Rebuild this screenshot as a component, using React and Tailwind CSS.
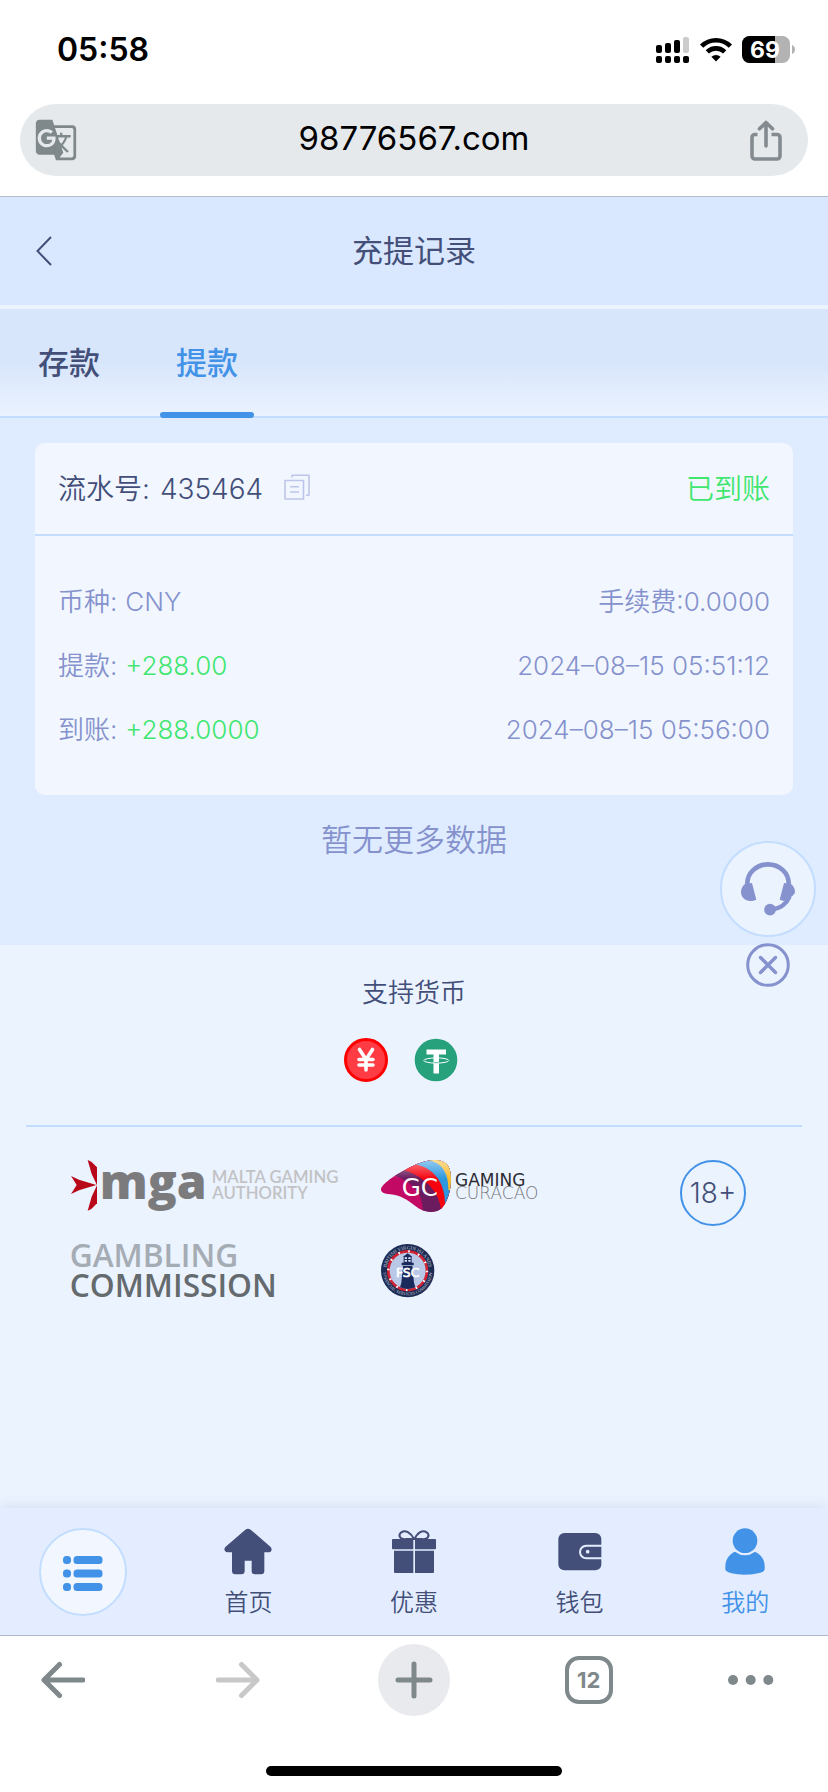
import { useState } from "react";
import { MdGTranslate } from "react-icons/md";

const records = [
    {
        id: 435464,
        status: "已到账",
        rows: [
            { label: "币种:", value: "CNY", color: "text-[#8592cd]", right: "手续费:0.0000" },
            { label: "提款:", value: "+288.00", color: "text-[#3fe670]", right: "2024–08–15 05:51:12" },
            { label: "到账:", value: "+288.0000", color: "text-[#3fe670]", right: "2024–08–15 05:56:00" },
        ],
    },
]

const StatusBar = () => {
    return <div className="h-[104px] flex items-center justify-between pl-[57px] pr-8 pb-1">
        <span className="text-[32px] leading-10 font-semibold text-black">05:58</span>
        <div className="flex items-center gap-[9px]">
            <svg width="34" height="28" viewBox="0 0 34 28" aria-hidden="true">
                <rect x="0" y="9" width="6" height="8" rx="2" />
                <rect x="9" y="7" width="6" height="10" rx="2" />
                <rect x="18" y="4" width="6" height="13" rx="2" />
                <rect x="27" y="1" width="6" height="16" rx="2" fill="#cccccc" />
                <rect x="0" y="20" width="6" height="7" rx="2" />
                <rect x="9" y="20" width="6" height="7" rx="2" />
                <rect x="18" y="20" width="6" height="7" rx="2" />
                <rect x="27" y="20" width="6" height="7" rx="2" />
            </svg>
            <svg width="34" height="28" viewBox="0 0 34 28" fill="none" stroke="#000" strokeWidth="4.6" aria-hidden="true">
                <path d="M2.6 10.2a20.4 20.4 0 0 1 28.8 0" />
                <path d="M8.3 15.9a12.4 12.4 0 0 1 17.4 0" />
                <path d="M17 25.4l-4.6-4.6a6.5 6.5 0 0 1 9.2 0z" fill="#000" stroke="none" />
            </svg>
            <svg width="54" height="28" viewBox="0 0 54 28" aria-hidden="true">
                <clipPath id="battery"><rect x="0" y="0" width="48" height="27" rx="7.5" /></clipPath>
                <g clipPath="url(#battery)">
                    <rect width="48" height="27" fill="#b3b3b3" />
                    <rect width="33" height="27" fill="#000" />
                </g>
                <path d="M50 9c2 .6 3 2.400 3 4.500s-1 3.900-3 4.500z" fill="#b3b3b3" />
                <text x="23" y="22" textAnchor="middle" fontSize="23" fontWeight="700" fill="#fff">69</text>
            </svg>
        </div>
    </div>
}

const AddressBar = () => {
    return <div className="px-5 pb-5 border-b border-[#b3bccb]">
        <div className="h-[72px] rounded-full bg-[#e5e9ec] flex items-center justify-between px-[14px]">
            <button type="button" aria-label="Translate" className="w-[44px] text-[#7f888b]">
                <MdGTranslate size={44} />
            </button>
            <span className="pb-1 text-[33px] leading-10 text-black">98776567.com</span>
            <button type="button" aria-label="Share" className="w-[44px] flex">
                <svg width="36" height="42" viewBox="7 -1 36 42" fill="none" stroke="#848b90" strokeWidth="3.6" strokeLinecap="round" strokeLinejoin="round">
                    <path d="M14.500 14.500H12a3 3 0 0 0-3 3V36a3 3 0 0 0 3 3h22a3 3 0 0 0 3-3V17.500a3 3 0 0 0-3-3H28.500" strokeLinecap="butt" />
                    <path d="M23 26V3M16.500 8.800L23 2.500l6.500 6.300" />
                </svg>
            </button>
        </div>
    </div>
}

const RecordCard = ({ record }) => {
    return <article className="rounded-[10px] bg-[#f2f7ff]">
        <div className="h-[93px] border-b-2 border-[#c3ddff] px-[23px] flex items-center justify-between text-[28px] leading-10">
            <div className="flex items-center">
                <span className="flex gap-2.5 font-[350] text-[#434f79]"><span>流水号:</span><span>{record.id}</span></span>
                <button type="button" aria-label="复制" className="ml-5">
                    <svg width="30" height="30" viewBox="0 0 30 30" fill="none" stroke="#bdc6ea" strokeWidth="1.600" strokeLinejoin="round">
                        <rect x="2" y="6.500" width="18.500" height="18.500" />
                        <path d="M9 3.500V1.200h17v20h-3M7 12.800h9M7 18h9" />
                    </svg>
                </button>
            </div>
            <span className="font-[350] text-[#3fe670]">{record.status}</span>
        </div>
        <div className="px-[23px] pt-[34px] pb-[33px] text-[26px] leading-[64px] font-[350] text-[#8592cd]">
            {
                record.rows.map((row) => (
                    <div key={row.label} className="flex justify-between">
                        <span className="flex gap-2"><span>{row.label}</span><span className={row.color}>{row.value}</span></span>
                        <span>{row.right}</span>
                    </div>
                ))
            }
        </div>
    </article>
}

const FloatingService = () => {
    return <div className="absolute right-3 bottom-[-42px] flex flex-col items-center gap-1.5">
        <button type="button" aria-label="客服" className="w-24 h-24 rounded-full border-2 border-[#c3ddff] bg-[#ebf3ff] flex items-center justify-center">
            <svg width="54" height="54" viewBox="0 0 162 162" fill="none">
                <path d="M19 68V64a62 57 0 0 1 124 0v4" stroke="#8592cd" strokeWidth="14" />
                <path d="M12 66l21-3 13 50C20 124 0 110 0 90c0-10 5-18 12-24z" fill="#8592cd" />
                <path d="M150 66l-21-3-13 50 12 4c10-4 34-17 34-28 0-9-5-17-12-23z" fill="#8592cd" />
                <path d="M146 104c-8 18-26 36-54 38" stroke="#8592cd" strokeWidth="13" />
                <circle cx="87" cy="143" r="17.500" fill="#8592cd" />
            </svg>
        </button>
        <button type="button" aria-label="关闭">
            <svg width="44" height="44" viewBox="0 0 44 44" fill="none" stroke="#8592cd" strokeLinecap="round">
                <circle cx="22" cy="22" r="20.300" strokeWidth="3" />
                <path d="M14.500 14.500l15 15M29.500 14.500l-15 15" strokeWidth="3.400" />
            </svg>
        </button>
    </div>
}

const CnyIcon = () => (
    <svg width="44" height="44" viewBox="0 0 44 44" fill="none" role="img" aria-label="CNY">
        <circle cx="22" cy="22" r="20.500" fill="#ff3b44" stroke="#ff0000" strokeWidth="3" />
        <path d="M15.500 11.500L22 21.500l6.500-10M15 21.500h14M15 27h14M22 21.500V32" stroke="#fff" strokeWidth="3.600" strokeLinecap="round" strokeLinejoin="round" />
    </svg>
)

const UsdtIcon = () => (
    <svg width="44" height="44" viewBox="0 0 44 44" fill="none" role="img" aria-label="USDT">
        <circle cx="22" cy="22" r="21.300" fill="#27a17c" />
        <path d="M12.500 11.500h19.500v5h-7V35.500h-5.500V16.500h-7z" fill="#fff" />
        <path d="M19.500 23.800q3 .4 5.500 0v1.200q-2.500.4-5.500 0z" fill="#27a17c" />
        <ellipse cx="22.300" cy="22.500" rx="12.500" ry="2.600" stroke="#fff" strokeWidth="1" />
    </svg>
)

const MgaLogo = () => (
    <svg className="overflow-visible" width="270" height="54" viewBox="0 0 810 162" role="img" aria-label="Malta Gaming Authority">
        <g fill="#b80718">
            <path d="M50 0l11 5 17 17v54L62 42z" />
            <path d="M50 152l11-5 17-17V76L62 110z" />
            <path d="M0 48l24 11 52 16-52 16L0 102l17-27z" />
        </g>
        <text x="86" y="118" fontFamily="Open Sans" fontSize="144" fontWeight="800" fill="#7b7b7d">mga</text>
        <g fontFamily="Lato" fontSize="50" fontWeight="600" fill="#c2c2c4">
            <text x="422" y="70">MALTA GAMING</text>
            <text x="424" y="117">AUTHORITY</text>
        </g>
    </svg>
)

const CuracaoLogo = () => (
    <svg className="overflow-visible" width="164" height="54" viewBox="0 0 492 162" role="img" aria-label="Gaming Curacao">
        <defs>
            <clipPath id="gcShape">
                <path d="M0 88C0 76 32 50 74 29C105 12 135 0 162 0C194 0 210 18 210 55C210 95 198 127 182 145C165 162 127 158 104 139C77 117 57 106 28 103C8 101 0 98 0 88z" />
            </clipPath>
            <linearGradient id="gcGloss" x1="0" y1="0" x2="0" y2="1">
                <stop offset="0" stopColor="#fff" stopOpacity="0.500" />
                <stop offset="0.350" stopColor="#fff" stopOpacity="0" />
            </linearGradient>
        </defs>
        <g clipPath="url(#gcShape)">
            <rect width="212" height="162" fill="#c20a65" />
            <path d="M32 44C90 60 135 105 122 162H215V0H32z" fill="#6b1c5e" />
            <path d="M60 28C125 45 182 95 180 160H215V0H60z" fill="#f5040f" />
            <path d="M98 12C150 20 195 60 192 140H220V0H98z" fill="#2c97df" />
            <path d="M138 0C180 6 203 35 202 90H220V0z" fill="#fbbb2d" />
            <rect width="212" height="162" fill="url(#gcGloss)" />
        </g>
        <text x="62" y="107" fontFamily="DejaVu Sans" fontSize="74" fill="#fff">GC</text>
        <text x="222" y="78" fontFamily="DejaVu Sans" fontSize="51" fill="#2b2b30">GAMING</text>
        <text x="222" y="118" fontFamily="DejaVu Sans" fontSize="51" fontWeight="200" fill="#77777b">CURACAO</text>
    </svg>
)

const GamblingLogo = () => (
    <svg className="overflow-visible" width="206" height="54" viewBox="0 0 618 162" role="img" aria-label="Gambling Commission" fontFamily="Open Sans">
        <text x="-4" y="70" fontSize="95" fontWeight="600" fill="#a5acb4">GAMBLING</text>
        <text x="-4" y="158" fontSize="95" fontWeight="600" fill="#646a6e">COMMISSION</text>
    </svg>
)

const FscLogo = () => (
    <svg width="54" height="54" viewBox="0 0 162 162" role="img" aria-label="FSC">
        <defs>
            <path id="ringTop" d="M16 80a64 64 0 0 1 128 0" />
            <path id="ringBottom" d="M6 80a74 74 0 0 0 148 0" />
        </defs>
        <circle cx="80" cy="80" r="80" fill="#1d2c55" />
        <circle cx="80" cy="80" r="58" fill="#b9c8e6" stroke="#cf2233" strokeWidth="8" />
        <circle cx="80" cy="80" r="58" fill="none" stroke="#fff" strokeWidth="7" strokeDasharray="5 25.370" />
        <g fontFamily="Liberation Serif" fontSize="15" fill="#c3c9d6" textAnchor="middle">
            <text><textPath href="#ringTop" startOffset="50%">BRITISH VIRGIN ISLANDS</textPath></text>
            <text fontSize="13"><textPath href="#ringBottom" startOffset="50%">FINANCIAL SERVICES COMMISSION</textPath></text>
        </g>
        <path d="M66 66h28l5 50 4 14q-23 10-46 0l4-14z" fill="#1a2a5c" />
        <path d="M62 56h36v8H62zM68 36h24v20H68zM80 28l14 10H66z" fill="#1a2a5c" />
        <path d="M71 40h7v5h-7zM82 40h7v5h-7zM71 48h7v5h-7zM82 48h7v5h-7z" fill="#dfe7f7" />
        <text x="80" y="98" textAnchor="middle" fontFamily="DejaVu Sans" fontSize="37" fill="#fff" stroke="#fff" strokeWidth="2">FSC</text>
    </svg>
)

const Footer = () => {
    return <section className="grow bg-[#ebf3ff] px-[26px]">
        <h2 className="pt-7 text-center text-[26px] leading-10 font-[350] text-[#434f79]">支持货币</h2>
        <div className="flex justify-center pt-[25px] pb-[43px] border-b-2 border-[#c3ddff]">
            <span className="mr-[26px]"><CnyIcon /></span>
            <span className="mr-[26px]"><UsdtIcon /></span>
        </div>
        <div className="flex justify-between items-start pt-[33px] pl-[45px] pr-14 pb-10">
            <div className="grid grid-cols-[310px_auto] gap-y-[30px]">
                <MgaLogo />
                <CuracaoLogo />
                <GamblingLogo />
                <FscLogo />
            </div>
            <div className="w-[66px] h-[66px] rounded-full border-2 border-[#4292e8] flex items-center justify-center text-[28px] font-[350] text-[#434f79]">18+</div>
        </div>
    </section>
}

const HomeIcon = () => (
    <svg width="48" height="48" viewBox="0 0 144 144" fill="#434f79">
        <path d="M64 5q8-6 16 0l60 52c6 7 2 16-6 16h-13v56q0 10-10 10H93q-10 0-10-10V98H62v31q0 10-10 10H34q-10 0-10-10V73H11c-9 0-13-9-7-16z" />
    </svg>
)

const GiftIcon = () => (
    <svg width="48" height="48" viewBox="0 0 144 144" fill="#434f79">
        <path d="M9 33h61v31H9q-3 0-3-3V36q0-3 3-3zM75 33h60q3 0 3 3v25q0 3-3 3H75zM12 68h58v67H15q-3 0-3-3zM75 68h57v64q0 3-3 3H75z" />
        <path d="M72 33C62 14 46 4 34 13c-12 10-3 23 16 20zM74 33c8-19 24-29 36-20 12 10 3 23-16 20z" fill="none" stroke="#434f79" strokeWidth="6" />
    </svg>
)

const WalletIcon = () => (
    <svg width="48" height="48" viewBox="0 0 144 144">
        <rect x="7" y="15" width="129" height="112" rx="18" fill="#434f79" />
        <path d="M144 53H91a19 19 0 0 0 0 38h53" fill="none" stroke="#e3edff" strokeWidth="6" />
        <circle cx="95" cy="71" r="5.500" fill="#e3edff" />
    </svg>
)

const UserIcon = () => (
    <svg width="48" height="48" viewBox="0 0 144 144" fill="#4292e8">
        <circle cx="72" cy="38" r="37" />
        <path d="M42 71q30 22 60 0c18 7 29 25 29 44v9c0 10-30 16-59 16s-59-6-59-16v-9c0-19 11-37 29-44z" />
    </svg>
)

const navItems = [
    { name: "首页", Icon: HomeIcon },
    { name: "优惠", Icon: GiftIcon },
    { name: "钱包", Icon: WalletIcon },
    { name: "我的", Icon: UserIcon, active: true },
]

const BottomNav = () => {
    return <nav className="relative h-32 grid grid-cols-5 bg-[#e3edff] border-b border-[#b0b9cc] shadow-[0_-2px_12px_rgba(70,90,130,0.12)]">
        <button type="button" aria-label="菜单" className="self-center justify-self-center w-[88px] h-[88px] rounded-full border-2 border-[#c3ddff] bg-[#f2f7ff] flex items-center justify-center">
            <svg width="40" height="38" viewBox="0 0 40 38" fill="#4292e8">
                <rect x="0" y="3" width="8" height="8" rx="3.500" />
                <rect x="10.500" y="3" width="29" height="8" rx="3.500" />
                <rect x="0" y="16.500" width="8" height="8" rx="3.500" />
                <rect x="10.500" y="16.500" width="29" height="8" rx="3.500" />
                <rect x="0" y="30" width="8" height="8" rx="3.500" />
                <rect x="10.500" y="30" width="29" height="8" rx="3.500" />
            </svg>
        </button>
        {
            navItems.map(({ name, Icon, active }) => (
                <a key={name} href="#" className="flex flex-col items-center pt-5 gap-[9px]">
                    <Icon />
                    <span className={active ? "text-2xl leading-9 font-[350] text-[#4292e8]" : "text-2xl leading-9 font-[350] text-[#434f79]"}>{name}</span>
                </a>
            ))
        }
    </nav>
}

const BrowserBar = () => {
    return <div className="relative h-[156px] bg-white flex flex-col justify-between items-center pt-2 pb-4">
        <div className="w-full flex items-center justify-between pl-[27px] pr-7">
            <button type="button" aria-label="Back" className="w-[72px] flex justify-center">
                <svg width="44" height="38" viewBox="0 0 44 38" fill="none" stroke="#7f888b" strokeWidth="5" strokeLinecap="round" strokeLinejoin="round">
                    <path d="M42 19H3M18.500 3.500L3 19l15.500 15.500" />
                </svg>
            </button>
            <button type="button" aria-label="Forward" className="w-[72px] flex justify-center">
                <svg width="44" height="38" viewBox="0 0 44 38" fill="none" stroke="#c8c8c8" strokeWidth="5" strokeLinecap="round" strokeLinejoin="round">
                    <path d="M2 19h39M25.500 3.500L41 19L25.500 34.500" />
                </svg>
            </button>
            <button type="button" aria-label="New tab" className="w-[72px] h-[72px] rounded-full bg-[#e8eaed] flex items-center justify-center">
                <svg width="38" height="38" viewBox="0 0 38 38" fill="none" stroke="#7f888b" strokeWidth="5" strokeLinecap="round">
                    <path d="M19 3v32M3 19h32" />
                </svg>
            </button>
            <button type="button" aria-label="Tabs" className="w-[72px] flex justify-center">
                <span className="w-12 h-12 rounded-[14px] border-4 border-[#7f888b] flex items-center justify-center text-[22px] leading-6 font-bold text-[#7f888b]">12</span>
            </button>
            <button type="button" aria-label="More" className="w-[72px] flex">
                <svg width="46" height="10" viewBox="0 0 46 10" fill="#7f888b">
                    <circle cx="5" cy="5" r="5" />
                    <circle cx="22.700" cy="5" r="5" />
                    <circle cx="40.300" cy="5" r="5" />
                </svg>
            </button>
        </div>
        <div className="w-[296px] h-2.5 rounded-full bg-black" />
    </div>
}

const tabs = ["存款", "提款"]

const App = () => {
    const [tab, setTab] = useState("提款")

    return <div className="min-h-screen flex flex-col bg-white font-['Inter','Noto_Sans_CJK_SC',sans-serif]">
        <StatusBar />
        <AddressBar />
        <header className="h-28 px-8 flex items-center border-b-4 border-[#ebf3ff] bg-[#d9e7ff]">
            <button type="button" aria-label="返回" className="w-6">
                <svg width="24" height="30" viewBox="0 0 24 30" fill="none" stroke="#434f79" strokeWidth="2">
                    <path d="M19 1L5.500 15L19 29" />
                </svg>
            </button>
            <h1 className="grow text-center text-[31px] leading-10 font-normal text-[#434f79]">充提记录</h1>
            <span className="w-6" />
        </header>
        <div className="h-[109px] pl-[22px] flex gap-11 border-b-2 border-[#c3ddff] bg-linear-to-b from-[#d8e6fb] from-50% to-[#ebf2ff]">
            {
                tabs.map((name) => (
                    <button
                        key={name}
                        type="button"
                        onClick={() => setTab(name)}
                        className={name === tab
                            ? "h-[109px] w-[94px] flex flex-col justify-end items-center gap-[29px] text-[31px] leading-10 font-medium text-[#4292e8]"
                            : "h-[109px] w-[94px] flex flex-col justify-end items-center gap-[29px] text-[31px] leading-10 font-medium text-[#434f79]"}
                    >
                        {name}
                        <span className={name === tab ? "w-full h-1.5 rounded-full bg-[#4292e8]" : "w-full h-1.5"} />
                    </button>
                ))
            }
        </div>
        <main className="relative z-10 bg-[#dfecff] px-[35px] pt-[25px] pb-[85px]">
            {records.map((record) => <RecordCard key={record.id} record={record} />)}
            <p className="pt-[25px] text-center text-[31px] leading-10 font-[350] text-[#8592cd]">暂无更多数据</p>
            <FloatingService />
        </main>
        <Footer />
        <BottomNav />
        <BrowserBar />
    </div>
}

export default App
